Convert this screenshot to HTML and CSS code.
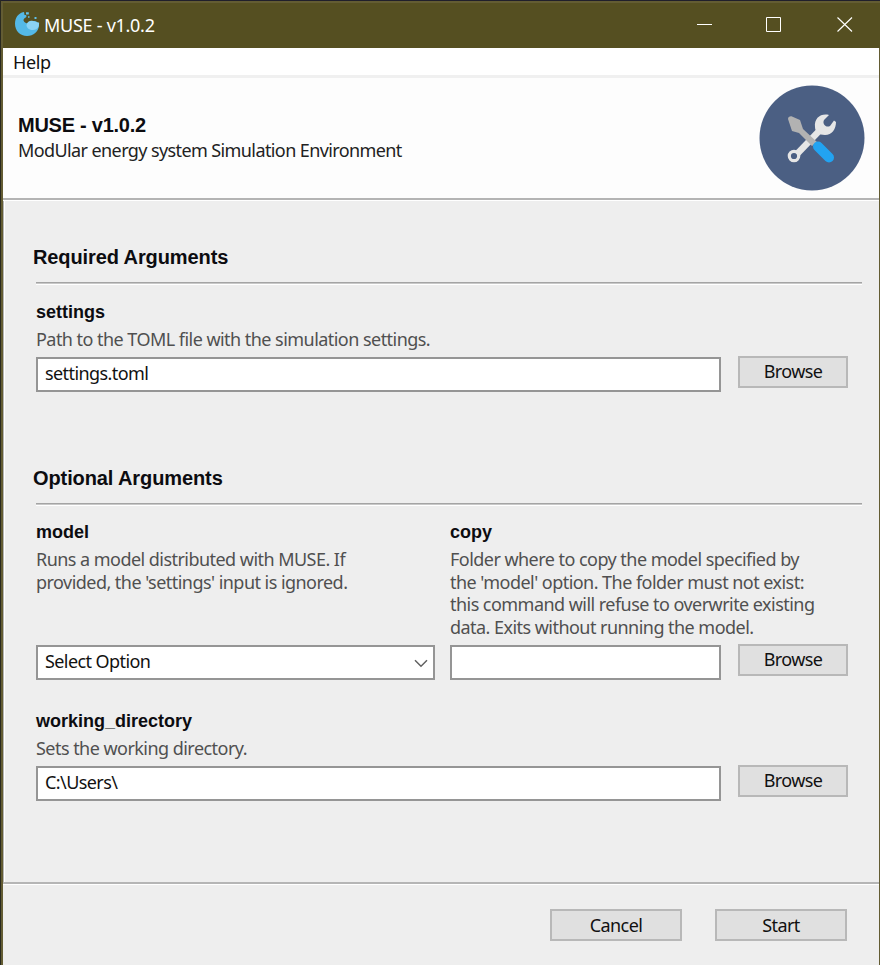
FILE: index.html
```html
<!DOCTYPE html>
<html lang="en">
<head>
<meta charset="utf-8">
<title>MUSE - v1.0.2</title>
<link rel="stylesheet" href="styles.css">
</head>
<body>
<div class="window">
  <header class="titlebar">
    <svg class="app-icon" width="26" height="26" viewBox="0 0 26 26">
      <path d="M10 1C4 2 1 7 1 12.500C1 20 6 25 13 25C19.500 25 24.500 20.500 25 14.500C25 12 23 10 19 10C16 10 14.500 13 12 12C9.500 11 8.500 8.500 11 7C13.500 5.500 12.500 3.500 10.500 4Z" fill="#54b9e7"/>
      <path d="M12.500 14C13.500 10.500 16 9.200 19 10C22 10.500 23.500 12 25 11.500C25.500 15 24 19 19 19C15.500 19 12.500 17 12.500 14Z" fill="#8bd3f4"/>
      <path d="M12 1.200h2.800v2.300h-2.800zM14 5.200h1.500v1.500h-1.500zM20.500 6h2v2h-2z" fill="#62c1eb"/>
    </svg>
    <span class="window-title">MUSE - v1.0.2</span>
    <div class="controls">
      <svg width="16" height="16" viewBox="0 0 16 16"><path d="M0 8.500h15" stroke="#fff"/></svg>
      <svg width="16" height="16" viewBox="0 0 16 16"><path d="M-.5 1.500h14v14h-14z" fill="none" stroke="#fff"/></svg>
      <svg width="16" height="16" viewBox="0 0 16 16"><path d="M.5 1.500l14.500 14M15 1.500l-14.500 14" stroke="#fff" stroke-width="1.150"/></svg>
    </div>
  </header>
  <nav class="menu"><span>Help</span></nav>
  <section class="banner">
    <div>
      <h1>MUSE - v1.0.2</h1>
      <p class="tagline">ModUlar energy system Simulation Environment</p>
    </div>
    <svg class="logo" width="106" height="106" viewBox="0 0 106 106">
      <circle cx="53" cy="53" r="52.500" fill="#4b5f83"/>
      <path d="M38 69L63 43" stroke="#e6e6e6" stroke-width="6.500"/>
      <circle cx="35" cy="71" r="4.700" fill="none" stroke="#e6e6e6" stroke-width="3.200"/>
      <path d="M70 30C62 28 55 33 56 42C56 47 60 50 66 50C73 50 77 44 77 37L75 35.500L71 41C67 43 63 39 65 35Z" fill="#e6e6e6"/>
      <path d="M29 34C29 32 31 31 33 31.500L41 35L44 44L58 57L53 61L40 48L33 46Z" fill="#b2b2b2"/>
      <path d="M59 61.500L70 72.500" stroke="#22a3f1" stroke-width="10" stroke-linecap="round"/>
    </svg>
  </section>
  <main class="form">
    <section class="group required">
      <h2>Required Arguments</h2>
      <hr>
      <h3>settings</h3>
      <p>Path to the TOML file with the simulation settings.</p>
      <div class="row"><div class="field">settings.toml</div><div class="button">Browse</div></div>
    </section>
    <section class="group">
      <h2>Optional Arguments</h2>
      <hr>
      <div class="columns">
        <div class="column model">
          <h3>model</h3>
          <p>Runs a model distributed with MUSE. If<br>provided, the 'settings' input is ignored.</p>
          <div class="field select">Select Option
            <svg width="14" height="9" viewBox="0 0 14 9"><path d="M1 1.300L7 7.200L13 1.300" fill="none" stroke="#606060" stroke-width="1.500"/></svg>
          </div>
        </div>
        <div class="column">
          <h3>copy</h3>
          <p>Folder where to copy the model specified by<br>the 'model' option. The folder must not exist:<br>this command will refuse to overwrite existing<br>data. Exits without running the model.</p>
          <div class="row"><div class="field"></div><div class="button">Browse</div></div>
        </div>
      </div>
      <h3 class="workdir">working_directory</h3>
      <p>Sets the working directory.</p>
      <div class="row"><div class="field">C:\Users\</div><div class="button">Browse</div></div>
    </section>
  </main>
  <footer class="actions">
    <div class="button wide">Cancel</div>
    <div class="button wide">Start</div>
  </footer>
</div>
</body>
</html>
```
FILE: styles.css
```css
* { box-sizing: border-box; }
body {
  margin: 0;
  background: #29291f;
  font: 18px/22.5px "Noto Sans", sans-serif;
  letter-spacing: -0.58px;
  color: #111;
}
h1, h2, h3, p { margin: 0; }
h1, h2, h3 {
  font-family: "Liberation Sans", sans-serif;
  font-weight: 700;
  letter-spacing: 0;
  color: #0c0c10;
}
.window {
  height: 965px;
  display: flex;
  flex-direction: column;
  border: solid #635c33;
  border-width: 0 1px 0 2px;
  margin-left: 1px;
  background: #eee;
}
.titlebar {
  height: 48px;
  margin: 0 -1px 0 -2px;
  padding: 1px 27px 0 13px;
  display: flex;
  align-items: center;
  background: #554f21;
  border-top: 1px solid #201f2b;
  box-shadow: inset 0 2px #635c33, inset 2px 0 #635c33;
  color: #fff;
}
.app-icon { margin-top: -3px; }
.window-title { margin: 1px 0 0 4px; letter-spacing: -0.27px; }
.controls { margin: -3px 0 0 auto; display: flex; gap: 54px; }
.controls svg { display: block; overflow: visible; }
.menu {
  height: 30px;
  padding: 3px 10px 0;
  background: #fff;
  border-bottom: 3px solid #f0f0f0;
  letter-spacing: -0.4px;
}
.banner {
  height: 123px;
  padding: 7px 14.5px 0 15px;
  display: flex;
  justify-content: space-between;
  background: #fdfdfd;
  border-bottom: 1px solid #fff;
  box-shadow: inset 0 -2px #b4b4b4;
}
.banner h1 { font-size: 20px; line-height: 24px; padding-top: 28px; letter-spacing: -0.25px; }
.tagline { color: #222; margin-top: 2px; letter-spacing: -0.6px; }
.form {
  height: 681px;
  padding: 44px 17px 0 29px;
  border-left: 1px solid #b4b4b4;
  box-shadow: inset 1px 0 #fff;
}
.required { height: 221px; }
h2 { font-size: 20px; line-height: 24px; letter-spacing: -0.1px; }
hr {
  height: 3px;
  margin: 13px 0 16px 3px;
  border: 0;
  background: linear-gradient(#a4a4a4 0 1px, #c8c8c8 1px 2px, #fff 2px);
}
h3 { font-size: 18px; line-height: 22px; padding-left: 3px; margin-bottom: 5px; }
.group p {
  padding-left: 3px;
  color: #505050;
  letter-spacing: -0.54px;
  white-space: nowrap;
}
.row { display: flex; gap: 17px; padding-right: 14px; }
.field {
  flex: 1;
  height: 35px;
  margin-top: 6px;
  padding: 3px 7px;
  border: 2px solid #959595;
  background: #fff;
}
.group > .row { padding-left: 3px; }
.button {
  width: 110px;
  height: 32px;
  margin-top: 5px;
  padding-top: 2px;
  border: 2px solid #b8b8b8;
  background: #e0e0e0;
  text-align: center;
}
.columns {
  display: grid;
  grid-template-columns: 399px 1fr;
  gap: 15px;
  padding-left: 3px;
  margin-top: -1px;
}
.column { display: flex; flex-direction: column; }
.column h3, .column p { padding-left: 0; }
.column .row { margin-top: 1px; }
.select {
  flex: none;
  margin-top: auto;
  display: flex;
  justify-content: space-between;
}
.select svg { margin: 9px -2px 0 0; }
.workdir { margin-top: 30px; }
.actions {
  flex: 1;
  padding: 20px 32px 0;
  display: flex;
  justify-content: flex-end;
  gap: 33px;
  border-top: 2px solid #b5b5b5;
  box-shadow: inset 0 1px #fff;
}
.actions .button { padding-top: 3px; }
.wide { width: 132px; }
```
